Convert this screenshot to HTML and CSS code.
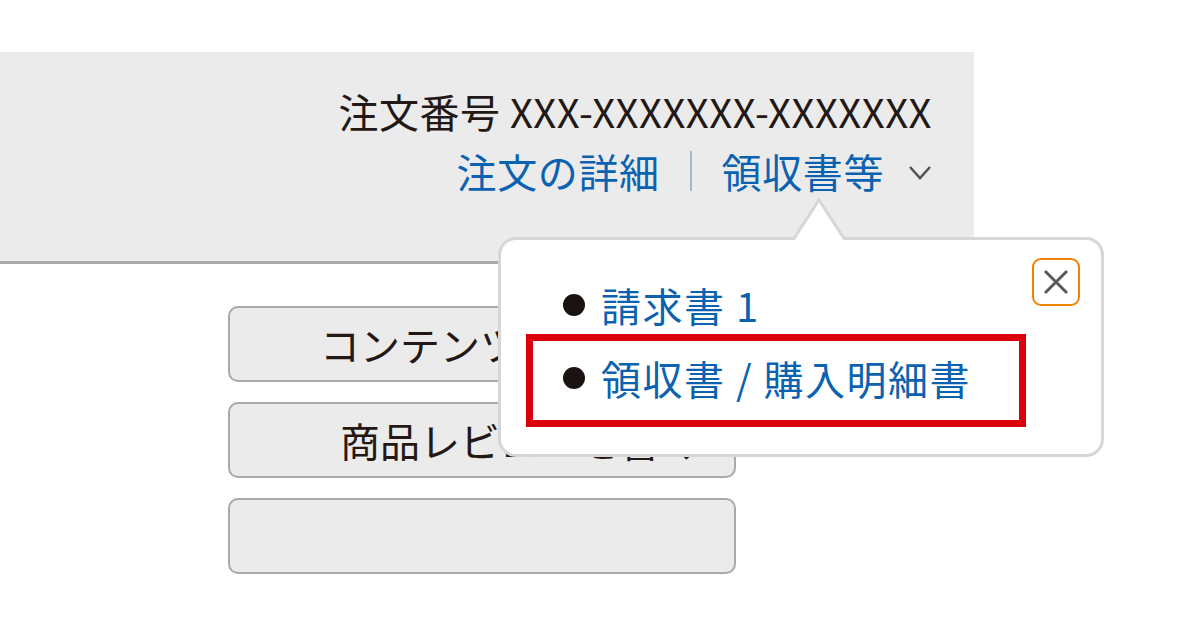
FILE: index.html
```html
<!DOCTYPE html>
<html lang="ja">
<head>
  <meta charset="UTF-8" />
  <title>注文履歴</title>
  <link rel="stylesheet" href="styles.css">
</head>
<body>
  <div class="pagina">
    <div class="cabecalho">
      <div class="numero">注文番号 XXX-XXXXXXX-XXXXXXX</div>
      <div class="links">
        <a class="link">注文の詳細</a>
        <span class="sep"></span>
        <a class="link">領収書等</a>
        <svg class="chevron" width="24" height="16" viewBox="0 0 24 16"><path d="M2 2 L12 13 L22 2" fill="none" stroke="#555" stroke-width="2.6"/></svg>
      </div>
    </div>

    <div class="botoes">
      <div class="botao">コンテンツライブラリ</div>
      <div class="botao">商品レビューを書く</div>
      <div class="botao"></div>
    </div>

    <div class="popover">
      <svg class="seta" width="56" height="44" viewBox="0 0 56 44"><path d="M2 43 L28 3 L54 43" fill="#fff" stroke="#d6d6d6" stroke-width="3"/></svg>
      <button class="fechar" aria-label="閉じる">
        <svg width="28" height="28" viewBox="0 0 28 28"><path d="M3 3 L25 25 M25 3 L3 25" stroke="#5a5a5a" stroke-width="3"/></svg>
      </button>
      <ul class="itens">
        <li class="item">請求書 1</li>
        <li class="item destaque">領収書 / 購入明細書</li>
      </ul>
    </div>
  </div>
</body>
</html>
```

FILE: styles.css
```css
* {
  margin: 0; padding: 0; box-sizing: border-box;
}
body {
  background: #fff;
  font-family: "Noto Sans CJK JP", "Noto Sans", sans-serif;
  color: #231815;
  width: 1200px;
  height: 640px;
  overflow: hidden;
}

.pagina {
  position: relative;
  padding-top: 52px;
}

.cabecalho {
  width: 974px;
  background: #ebebeb;
  border-bottom: 3px solid #a9a9a9;
  padding: 29px 42px 60px;
  display: flex;
  flex-direction: column;
  align-items: flex-end;
}

.numero {
  font-size: 40px;
  line-height: 60px;
  letter-spacing: 0.5px;
}

.links {
  display: flex;
  align-items: center;
  height: 60px;
}

.link {
  font-size: 40px;
  line-height: 60px;
  color: #0b62b0;
  letter-spacing: 0.6px;
}

.sep {
  width: 2px;
  height: 40px;
  background: #9db7d4;
  margin: 0 30px;
}

.chevron {
  margin-left: 24px;
  margin-top: 4px;
}

.botoes {
  margin: 42px 0 0 228px;
  width: 508px;
  display: flex;
  flex-direction: column;
  gap: 20px;
}

.botao {
  height: 76px;
  background: #ebebeb;
  border: 2px solid #a9a9a9;
  border-radius: 10px;
  font-size: 40px;
  line-height: 72px;
  text-align: center;
  padding-left: 76px;
  white-space: nowrap;
  overflow: hidden;
}

.popover {
  position: absolute;
  left: 498px;
  top: 237px;
  width: 606px;
  height: 220px;
  background: #fff;
  border: 3px solid #d6d6d6;
  border-radius: 18px;
  padding: 39px 0 0 25px;
}

.seta {
  position: absolute;
  left: 290px;
  top: -43px;
}

.fechar {
  position: absolute;
  top: 18px;
  right: 21px;
  width: 48px;
  height: 48px;
  background: #fff;
  border: 2px solid #f08300;
  border-radius: 9px;
  display: flex;
  align-items: center;
  justify-content: center;
}

.itens {
  list-style: none;
  width: 500px;
}

.item {
  font-size: 40px;
  line-height: 52px;
  color: #0b62b0;
  letter-spacing: 1.5px;
  padding-left: 37px;
  display: flex;
  align-items: center;
}

.item::before {
  content: "";
  width: 22px;
  height: 22px;
  border-radius: 50%;
  background: #1a1311;
  margin-right: 16px;
  flex-shrink: 0;
}

.destaque {
  border: 7px solid #dc000c;
  padding: 11px 0 16px 30px;
  margin-top: 3px;
}
```
